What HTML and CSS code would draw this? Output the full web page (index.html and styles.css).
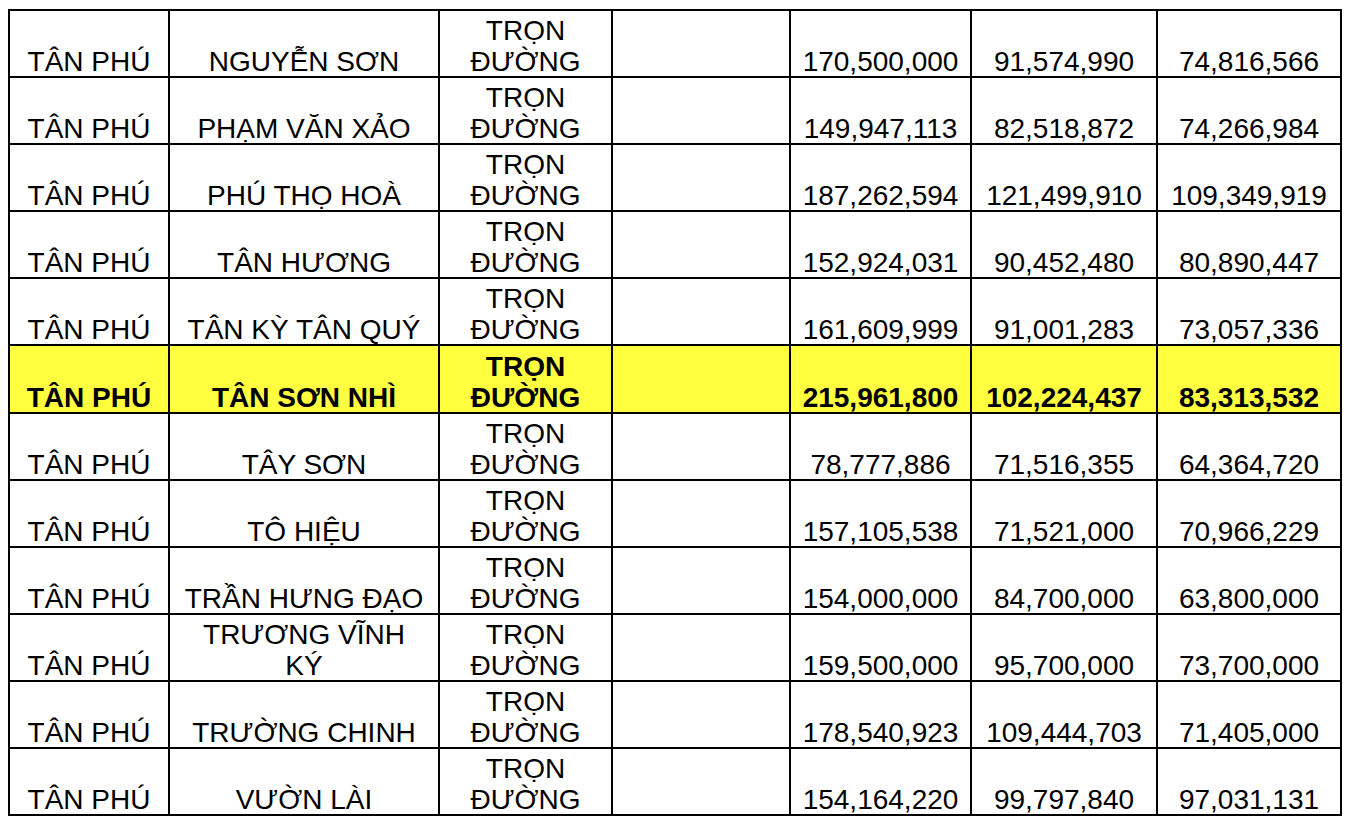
FILE: index.html
```html
<!DOCTYPE html>
<html lang="vi">
<head>
<meta charset="utf-8">
<title>Bảng giá đất - Tân Phú</title>
<link rel="stylesheet" href="styles.css">
</head>
<body>
<div class="sheet">
<table class="grid">
<colgroup>
<col class="c-district"><col class="c-street"><col class="c-range"><col class="c-empty"><col class="c-num1"><col class="c-num2"><col class="c-num3">
</colgroup>
<tbody>
<tr><td><div>TÂN PHÚ</div></td><td><div>NGUYỄN SƠN</div></td><td><div>TRỌN<br>ĐƯỜNG</div></td><td></td><td><div>170,500,000</div></td><td><div>91,574,990</div></td><td><div>74,816,566</div></td></tr>
<tr><td><div>TÂN PHÚ</div></td><td><div>PHẠM VĂN XẢO</div></td><td><div>TRỌN<br>ĐƯỜNG</div></td><td></td><td><div>149,947,113</div></td><td><div>82,518,872</div></td><td><div>74,266,984</div></td></tr>
<tr><td><div>TÂN PHÚ</div></td><td><div>PHÚ THỌ HOÀ</div></td><td><div>TRỌN<br>ĐƯỜNG</div></td><td></td><td><div>187,262,594</div></td><td><div>121,499,910</div></td><td><div>109,349,919</div></td></tr>
<tr><td><div>TÂN PHÚ</div></td><td><div>TÂN HƯƠNG</div></td><td><div>TRỌN<br>ĐƯỜNG</div></td><td></td><td><div>152,924,031</div></td><td><div>90,452,480</div></td><td><div>80,890,447</div></td></tr>
<tr><td><div>TÂN PHÚ</div></td><td><div>TÂN KỲ TÂN QUÝ</div></td><td><div>TRỌN<br>ĐƯỜNG</div></td><td></td><td><div>161,609,999</div></td><td><div>91,001,283</div></td><td><div>73,057,336</div></td></tr>
<tr class="hl"><td><div>TÂN PHÚ</div></td><td><div>TÂN SƠN NHÌ</div></td><td><div>TRỌN<br>ĐƯỜNG</div></td><td></td><td><div>215,961,800</div></td><td><div>102,224,437</div></td><td><div>83,313,532</div></td></tr>
<tr><td><div>TÂN PHÚ</div></td><td><div>TÂY SƠN</div></td><td><div>TRỌN<br>ĐƯỜNG</div></td><td></td><td><div>78,777,886</div></td><td><div>71,516,355</div></td><td><div>64,364,720</div></td></tr>
<tr><td><div>TÂN PHÚ</div></td><td><div>TÔ HIỆU</div></td><td><div>TRỌN<br>ĐƯỜNG</div></td><td></td><td><div>157,105,538</div></td><td><div>71,521,000</div></td><td><div>70,966,229</div></td></tr>
<tr><td><div>TÂN PHÚ</div></td><td><div>TRẦN HƯNG ĐẠO</div></td><td><div>TRỌN<br>ĐƯỜNG</div></td><td></td><td><div>154,000,000</div></td><td><div>84,700,000</div></td><td><div>63,800,000</div></td></tr>
<tr><td><div>TÂN PHÚ</div></td><td><div>TRƯƠNG VĨNH<br>KÝ</div></td><td><div>TRỌN<br>ĐƯỜNG</div></td><td></td><td><div>159,500,000</div></td><td><div>95,700,000</div></td><td><div>73,700,000</div></td></tr>
<tr><td><div>TÂN PHÚ</div></td><td><div>TRƯỜNG CHINH</div></td><td><div>TRỌN<br>ĐƯỜNG</div></td><td></td><td><div>178,540,923</div></td><td><div>109,444,703</div></td><td><div>71,405,000</div></td></tr>
<tr><td><div>TÂN PHÚ</div></td><td><div>VƯỜN LÀI</div></td><td><div>TRỌN<br>ĐƯỜNG</div></td><td></td><td><div>154,164,220</div></td><td><div>99,797,840</div></td><td><div>97,031,131</div></td></tr>
</tbody>
</table>
<span class="corner"></span>
</div>
</body>
</html>
```
FILE: styles.css
```css
html, body {
  margin: 0;
  padding: 0;
  background: #ffffff;
}
body {
  padding: 9px 0 0 8px;
  font-family: "Liberation Sans", Arial, sans-serif;
  color: #000;
}
.sheet {
  position: relative;
  width: 1344px;
}
.grid {
  border-collapse: collapse;
  table-layout: fixed;
  width: 1334px;
  font-size: 28px;
}
.c-district { width: 160px; }
.c-street { width: 270px; }
.c-range { width: 173px; }
.c-empty { width: 178px; }
.c-num1 { width: 181px; }
.c-num2 { width: 186px; }
.c-num3 { width: 184px; }
.grid td {
  border: 2px solid #000;
  height: 67px;
  padding: 0;
  vertical-align: bottom;
  text-align: center;
  line-height: 31px;
  white-space: nowrap;
  box-sizing: border-box;
}
.grid td > div {
  margin-bottom: -1px;
}
.grid tr.hl td {
  height: 68px;
  background: #ffff3f;
  font-weight: bold;
}
.corner {
  position: absolute;
  left: 1337px;
  top: 811px;
  width: 9px;
  height: 9px;
  border-top: 1px solid #999;
  border-left: 1px solid #999;
}
```
